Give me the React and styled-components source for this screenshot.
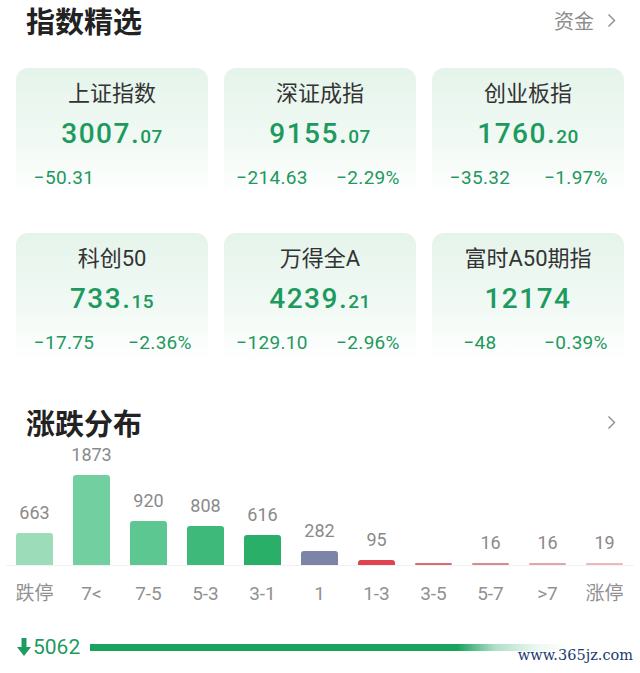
import React from 'react'
import styled, { createGlobalStyle } from 'styled-components'

const GlobalStyle = createGlobalStyle`
  body {
    margin: 0;
    background: #ffffff;
    font-family: Roboto, 'Noto Sans CJK SC', sans-serif;
  }
`

const indices = [
  { name: '上证指数', int: '3007.', dec: '07', change: '−50.31', pct: '' },
  { name: '深证成指', int: '9155.', dec: '07', change: '−214.63', pct: '−2.29%' },
  { name: '创业板指', int: '1760.', dec: '20', change: '−35.32', pct: '−1.97%' },
  { name: '科创50', int: '733.', dec: '15', change: '−17.75', pct: '−2.36%' },
  { name: '万得全A', int: '4239.', dec: '21', change: '−129.10', pct: '−2.96%' },
  { name: '富时A50期指', int: '12174', dec: '', change: '−48', pct: '−0.39%' },
]

const bars = [
  { label: '跌停', value: 663, color: '#9cdcb9' },
  { label: '7<', value: 1873, color: '#72d0a0' },
  { label: '7-5', value: 920, color: '#5cc790' },
  { label: '5-3', value: 808, color: '#3fb979' },
  { label: '3-1', value: 616, color: '#2aaf69' },
  { label: '1', value: 282, color: '#7c85a7' },
  { label: '1-3', value: 95, color: '#e0424f' },
  { label: '3-5', value: null, color: '#d86c75' },
  { label: '5-7', value: 16, color: '#d98990' },
  { label: '>7', value: 16, color: '#e2a5aa' },
  { label: '涨停', value: 19, color: '#ebb9bd' },
]

const Chevron = () => (
  <svg width="9" height="15" viewBox="0 0 9 15">
    <path d="M1.5 1.5 L7.5 7.5 L1.5 13.5" fill="none" stroke="#8a8a8a" strokeWidth="1.4" />
  </svg>
)

const DownArrow = () => (
  <svg width="14" height="18" viewBox="0 0 14 18">
    <rect x="4.5" y="0" width="5" height="10" fill="#1f9a60" />
    <path d="M0 9 L14 9 L7 18 Z" fill="#1f9a60" />
  </svg>
)

export default function App() {
  return (
    <Page>
      <GlobalStyle />
      <Header>
        <Title>指数精选</Title>
        <More>
          资金
          <Chevron />
        </More>
      </Header>

      <CardGrid>
        {indices.map((it) => (
          <Card key={it.name}>
            <Name>{it.name}</Name>
            <Value>
              {it.int}
              <Decimal>{it.dec}</Decimal>
            </Value>
            <Changes>
              <Change>{it.change}</Change>
              <Change>{it.pct}</Change>
            </Changes>
          </Card>
        ))}
      </CardGrid>

      <SectionHeader>
        <Title>涨跌分布</Title>
        <Chevron />
      </SectionHeader>

      <Chart>
        {bars.map((b) => (
          <Column key={b.label}>
            <BarValue>{b.value ?? ''}</BarValue>
            <Bar
              $color={b.color}
              $thin={!b.value || b.value < 50}
              style={{ height: Math.max(2, Math.round((b.value || 0) * 0.048)) }}
            />
          </Column>
        ))}
      </Chart>
      <Axis>
        {bars.map((b) => (
          <AxisLabel key={b.label}>{b.label}</AxisLabel>
        ))}
      </Axis>

      <Summary>
        <DownCount>
          <DownArrow />
          5062
        </DownCount>
        <Track />
      </Summary>

      <Watermark>www.365jz.com</Watermark>
    </Page>
  )
}

const Page = styled.div`
  position: relative;
  width: 640px;
  height: 673px;
  overflow: hidden;
  background: #ffffff;
`

const Header = styled.div`
  display: flex;
  align-items: center;
  justify-content: space-between;
  height: 40px;
  padding: 0 24px 0 26px;
`

const Title = styled.h2`
  margin: 0;
  font-family: 'Noto Sans CJK SC', sans-serif;
  font-size: 29px;
  font-weight: 700;
  line-height: 40px;
  color: #222222;
`

const More = styled.div`
  display: flex;
  align-items: center;
  gap: 13px;
  font-family: 'Noto Sans CJK SC', sans-serif;
  font-size: 20px;
  color: #8c8c8c;
`

const CardGrid = styled.div`
  display: grid;
  grid-template-columns: repeat(3, 1fr);
  column-gap: 16px;
  row-gap: 35px;
  margin-top: 28px;
  padding: 0 16px;
`

const Card = styled.div`
  height: 130px;
  box-sizing: border-box;
  padding-top: 12px;
  border-radius: 12px;
  background: linear-gradient(180deg, #e5f4eb 0%, #f1f9f4 55%, #ffffff 100%);
  text-align: center;
`

const Name = styled.div`
  font-size: 22px;
  line-height: 28px;
  color: #333333;
`

const Value = styled.div`
  margin-top: 8px;
  font-size: 28px;
  font-weight: 500;
  line-height: 36px;
  letter-spacing: 1.5px;
  color: #1d9a5e;
`

const Decimal = styled.span`
  font-size: 19px;
  letter-spacing: 0.5px;
`

const Changes = styled.div`
  display: grid;
  grid-template-columns: 1fr 1fr;
  margin-top: 10px;
  font-size: 19px;
  line-height: 26px;
  letter-spacing: 0.3px;
  color: #22985e;
`

const Change = styled.span`
  text-align: center;
`

const SectionHeader = styled(Header)`
  margin-top: 39px;
`

const Chart = styled.div`
  display: grid;
  grid-template-columns: repeat(11, 57px);
  align-items: end;
  height: 123px;
  margin: 0 6px;
  border-bottom: 1px solid #f1f1f1;
`

const Column = styled.div`
  display: flex;
  flex-direction: column;
  align-items: center;
`

const BarValue = styled.div`
  margin-bottom: 8px;
  font-size: 18px;
  line-height: 24px;
  color: #8a8a8a;
`

const Bar = styled.div`
  width: 37px;
  border-radius: ${(p) => (p.$thin ? '1px' : '3px 3px 0 0')};
  background: ${(p) => p.$color};
`

const Axis = styled.div`
  display: grid;
  grid-template-columns: repeat(11, 57px);
  margin: 16px 6px 0;
`

const AxisLabel = styled.div`
  font-size: 19px;
  line-height: 24px;
  text-align: center;
  color: #919191;
`

const Summary = styled.div`
  display: flex;
  align-items: center;
  gap: 10px;
  margin-top: 29px;
  padding: 0 17px;
`

const DownCount = styled.div`
  display: flex;
  align-items: center;
  gap: 2px;
  font-size: 21px;
  line-height: 24px;
  color: #1f9a60;
`

const Track = styled.div`
  flex: 1;
  height: 7px;
  background: linear-gradient(
    90deg,
    #1aa35f 0%,
    #1aa35f 69%,
    rgba(26, 163, 95, 0.35) 76%,
    rgba(26, 163, 95, 0.08) 84%,
    rgba(26, 163, 95, 0) 90%
  );
`

const Watermark = styled.div`
  position: absolute;
  right: 7px;
  top: 647px;
  font-family: 'DejaVu Serif', serif;
  font-size: 14.5px;
  color: #1b3b70;
`
